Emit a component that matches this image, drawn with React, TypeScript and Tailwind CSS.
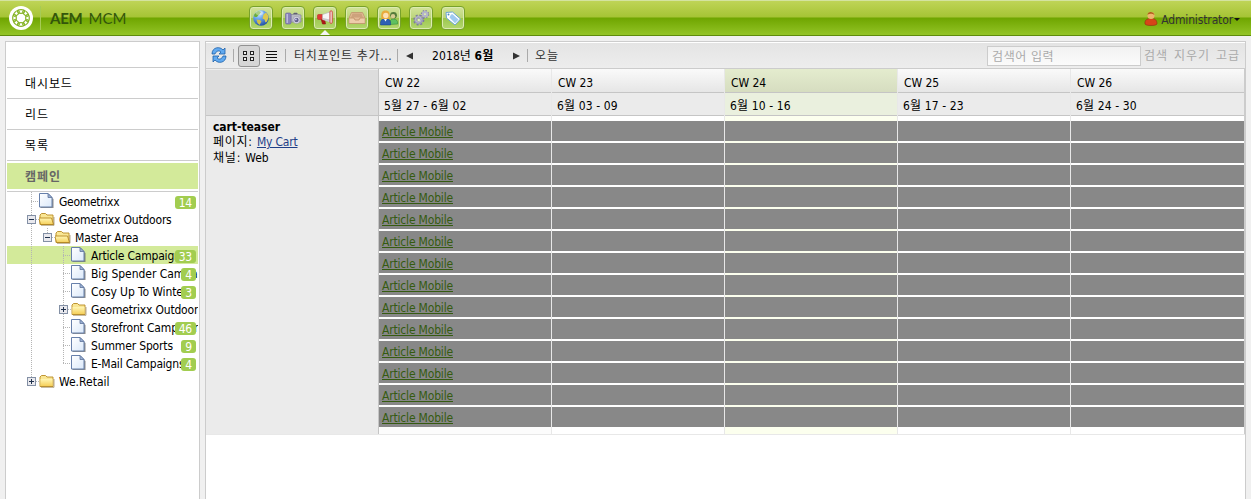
import React from 'react';

const UI = "font-['DejaVu_Sans_Condensed','DejaVu_Sans','Noto_Sans_CJK_KR',sans-serif] [font-stretch:condensed]";

function Tile({ children, active }: { children: React.ReactNode; active?: boolean }) {
  return (
    <div className="relative flex h-6 w-6 items-center justify-center rounded-[4px] border border-[#78a12b] bg-[linear-gradient(to_bottom,#d3e39a_0%,#bcd67c_48%,#9cc74e_52%,#b4d870_100%)] shadow-[inset_0_0_0_1px_#dcebb2]">
      {children}
      {active && (
        <svg className="absolute -bottom-[6px] left-[6px]" width="10" height="5" viewBox="0 0 10 5"><path d="M0 5 5 0l5 5z" fill="#f4f4f4" /></svg>
      )}
    </div>
  );
}

const Globe = () => (
  <svg width="18" height="18" viewBox="0 0 18 18" className="shrink-0">
    <defs><radialGradient id="gl" cx=".35" cy=".2" r=".85"><stop offset="0" stopColor="#e0f1ff" /><stop offset=".4" stopColor="#6daaf0" /><stop offset="1" stopColor="#1d4aa0" /></radialGradient></defs>
    <circle cx="9" cy="9" r="7.800" fill="url(#gl)" />
    <path d="M2 6c1-2 2.500-3.500 5-4L9 3 7.500 5.500 6 6.500 5 8 2.500 8z" fill="#6fae35" />
    <path d="M11.500 5.500l2.500-2c1.500 1.500 2.300 3 2.500 5l-1.500 4-1.500 1-1-3-2-1z" fill="#ddc94d" />
    <path d="M4.500 10.500l3.500.5 1.500 1.500-2 3.500-2-2z" fill="#d0c04c" />
    <ellipse cx="7.500" cy="4" rx="4" ry="2" fill="#fff" opacity=".4" />
  </svg>
);
const Camera = () => (
  <svg width="18" height="18" viewBox="0 0 18 18" className="shrink-0">
    <path d="M7 5.500h2L10 4h3l1 1.500 3 .5v7H7z" fill="#b9bac4" stroke="#85859a" strokeWidth=".7" />
    <path d="M10 4h3l.6 1.500H9z" fill="#60606c" />
    <rect x="1.500" y="4" width="5.500" height="11" rx="1.300" fill="#8983b9" stroke="#6b659d" strokeWidth=".6" /><path d="M3.200 5v9" stroke="#cbc7e7" strokeWidth="1.200" />
    <circle cx="12.500" cy="11" r="3.600" fill="#dedee8" stroke="#8e8ea2" strokeWidth=".6" /><circle cx="12.500" cy="11" r="2.200" fill="#62608c" /><circle cx="11.900" cy="10.400" r=".9" fill="#c6c4ee" />
  </svg>
);
const Horn = () => (
  <svg width="18" height="18" viewBox="0 0 18 18" className="shrink-0">
    <path d="M5 9.500h3.500l1 5.500H6.500z" fill="#b01818" stroke="#8e1010" strokeWidth=".6" />
    <path d="M1.500 6.500q0-1 1-1H7v5H2.500q-1 0-1-1z" fill="#e03a36" stroke="#b52020" strokeWidth=".5" />
    <path d="M6.500 5.500 14 3v10l-7.500-2.500z" fill="#f6f6f6" stroke="#b5b5b5" strokeWidth=".6" /><path d="M7 9l7 1.500V13l-7-2.500z" fill="#c9c9c9" />
    <rect x="14" y="1.800" width="2.200" height="12.600" rx="1.100" fill="#f3f3f3" stroke="#d03430" strokeWidth=".9" />
  </svg>
);
const Tray = () => (
  <svg width="18" height="18" viewBox="0 0 18 18" className="shrink-0">
    <path d="M3.500 3.500h11L17 9v5.500H1V9z" fill="#e2bb95" stroke="#c0936c" strokeWidth=".8" />
    <path d="M4.500 4.500h9L15 8.500H3z" fill="#cda27c" /><path d="M1.500 9H6l1 2h4l1-2h4.500v5h-15z" fill="#edccaa" />
    <path d="M1.500 9H6l1 2h4l1-2h4.500" fill="none" stroke="#b9875c" strokeWidth=".7" />
  </svg>
);
const Users = () => (
  <svg width="20" height="18" viewBox="0 0 20 18" className="shrink-0">
    <path d="M10.500 15.500c0-4 1.500-5.500 4-5.500s4.500 1.500 4.200 5z" fill="#5fc060" stroke="#2c8035" strokeWidth=".5" /><circle cx="14.500" cy="6.300" r="3.400" fill="#547b3a" /><circle cx="14" cy="7.200" r="2.200" fill="#d8cd92" />
    <path d="M1.500 16c-.5-5 1.500-6.500 5-6.500s5.500 1.500 5 6.500z" fill="#2e60b4" stroke="#173e80" strokeWidth=".5" /><path d="M2.500 10c-1-6 .5-8.500 4-8.500s5 2.500 4 8.500z" fill="#e8ab3c" /><circle cx="6.800" cy="6.500" r="2.700" fill="#fde0b4" /><path d="M5 10l1.500 2.500L8 10z" fill="#fff" />
  </svg>
);
const Gears = () => (
  <svg width="18" height="18" viewBox="0 0 18 18" fill="none" className="shrink-0">
    <circle cx="6.800" cy="11" r="4.400" stroke="#7e7e9c" strokeWidth="2.400" strokeDasharray="1.900 1.550" /><circle cx="6.800" cy="11" r="2.900" stroke="#9c9cb8" strokeWidth="2.800" /><circle cx="6.300" cy="10.400" r="2.800" stroke="#c4c4d6" strokeWidth=".8" /><circle cx="6.800" cy="11" r="1.300" fill="#e0ecc2" />
    <circle cx="13" cy="5.200" r="3.300" stroke="#8585a5" strokeWidth="1.800" strokeDasharray="1.400 1.190" /><circle cx="13" cy="5.200" r="2.100" stroke="#b4b4ca" strokeWidth="2.100" /><circle cx="13" cy="5.200" r=".9" fill="#e0ecc2" />
  </svg>
);
const Tag = () => (
  <svg width="18" height="18" viewBox="0 0 18 18" className="shrink-0"><path d="M2 3.500 8.500 3l8 7-5.500 6L2.500 9z" fill="#fff" stroke="#6ba6d8" strokeWidth="1" strokeLinejoin="round" /><path d="M7 5.500l1.500-.3 6 5.200-3.500 3.800L5.500 8.500z" fill="#9fcaf0" /><circle cx="4.500" cy="5.500" r="1" fill="#4a8abf" /></svg>
);

const Logo = () => (
  <svg width="24" height="24" viewBox="0 0 24 24" className="shrink-0">
    <circle cx="12" cy="12" r="12" fill="#fff" />
    <g fill="none" stroke="#86b526" strokeWidth="1.200">
      {[0, 45, 90, 135, 180, 225, 270, 315].map((a) => <ellipse key={a} cx="12" cy="5.500" rx="3.500" ry="1.800" transform={`rotate(${a} 12 12)`} />)}
    </g>
  </svg>
);

const FileIcon = () => (
  <svg className="shrink-0" width="16" height="18" viewBox="0 0 16 18">
    <defs><linearGradient id="fi" x2="1" y2="1"><stop stopColor="#fff" /><stop offset="1" stopColor="#dbe9fa" /></linearGradient></defs>
    <path d="M1.500 4h9l4 3v9h-13z" fill="#666" opacity=".75" />
    <path d="M.5 1.500h8.500l4 4v9.500H.5z" fill="url(#fi)" stroke="#6780ab" /><path d="M9 1.500v4h4z" fill="#9eb4d7" stroke="#5d7299" strokeWidth=".8" />
  </svg>
);
const FolderIcon = ({ open }: { open?: boolean }) => (
  <svg className="shrink-0" width="16" height="18" viewBox="0 0 16 18">
    <defs><linearGradient id="fo" x2="0" y2="1"><stop stopColor="#fff6b4" /><stop offset="1" stopColor="#f5cf5a" /></linearGradient></defs>
    <path d="M1 14.500V5l1.500-1.500h4L8 5h6v9.500z" fill="#f9e694" stroke="#b88a22" strokeWidth=".9" />
    {open
      ? <path d="M-.2 8h12.700l2 6.500h-13z" fill="url(#fo)" stroke="#b88a22" strokeWidth=".9" />
      : <path d="M1.500 7h12v7h-12z" fill="url(#fo)" />}
    <path d="M2 15.300h13V7" fill="none" stroke="#7d6430" opacity=".55" />
  </svg>
);
const Expander = ({ plus, line }: { plus?: boolean; line: string }) => (
  <svg className="shrink-0" width="16" height="18" viewBox="0 0 16 18" shapeRendering="crispEdges">
    <path d={line} stroke="#b4b4b4" strokeDasharray="1 1" />
    <path d="M13 9.500h3" stroke="#bbb" strokeDasharray="1 1" />
    <rect x="4.500" y="5.500" width="8" height="8" fill="#e9e9ee" stroke="#8390a5" /><path d="M6 9.500h5" stroke="#20324e" />
    {plus && <path d="M8.500 7v5" stroke="#20324e" />}
  </svg>
);

/* Dotted guide cell: "v" continues down, "t" branches to the item, "l" ends at the item. */
const Guide = ({ kind }: { kind: string }) => (
  <svg className="shrink-0" width="16" height="18" shapeRendering="crispEdges" stroke="#b4b4b4" strokeDasharray="1 1">
    {kind !== ' ' && <path d={kind === 'l' ? 'M8.500 0v9' : 'M8.500 0v18'} />}
    {(kind === 't' || kind === 'l') && <path d="M8 9.500h8" />}
  </svg>
);

type Row = { g: string; icon: 'file' | 'open' | 'closed'; ex?: '+' | '-'; line?: string; t: string; n?: number; sel?: boolean; ls: string };
const THROUGH = 'M8.500 0v18';
const UPPER = 'M8.500 0v5';
const rows: Row[] = [
  { g: 't', icon: 'file', t: 'Geometrixx', n: 14, ls: 'tracking-[-0.3px]' },
  { g: '', icon: 'open', ex: '-', line: THROUGH, t: 'Geometrixx Outdoors', ls: 'tracking-[-0.2px]' },
  { g: 'v', icon: 'open', ex: '-', line: UPPER, t: 'Master Area', ls: 'tracking-[-0.15px]' },
  { g: 'v t', icon: 'file', t: 'Article Campaign', n: 33, sel: true, ls: 'tracking-[-0.2px]' },
  { g: 'v t', icon: 'file', t: 'Big Spender Campai', n: 4, ls: 'tracking-[-0.05px]' },
  { g: 'v t', icon: 'file', t: 'Cosy Up To Winte', n: 3, ls: 'tracking-[-0.1px]' },
  { g: 'v ', icon: 'closed', ex: '+', line: THROUGH, t: 'Geometrixx Outdoor', ls: 'tracking-[-0.2px]' },
  { g: 'v t', icon: 'file', t: 'Storefront Campaigr', n: 46, ls: 'tracking-[-0.15px]' },
  { g: 'v t', icon: 'file', t: 'Summer Sports', n: 9, ls: 'tracking-[-0.15px]' },
  { g: 'v l', icon: 'file', t: 'E-Mail Campaigns', n: 4, ls: 'tracking-[-0.2px]' },
  { g: '', icon: 'closed', ex: '+', line: UPPER, t: 'We.Retail', ls: 'tracking-[0px]' },
];

const TreeRow = ({ r }: { r: Row }) => {
  const cells = r.ex && r.g.endsWith(' ') ? r.g.slice(0, -1) + ' ' : r.g;
  return (
    <div className={`relative flex h-[18px] shrink-0 items-center overflow-hidden pl-4 ${r.sel ? 'bg-[#d3ea9a]' : ''}`}>
      {cells.split('').map((k, i) => <Guide key={i} kind={k} />)}
      {r.ex && <Expander plus={r.ex === '+'} line={r.line ?? ''} />}
      {r.icon === 'file' ? <FileIcon /> : <FolderIcon open={r.icon === 'open'} />}
      <span className={`ml-1 whitespace-pre pt-[2px] text-[12px] leading-[18px] ${r.ls}`}>{r.t}</span>
      {r.n && <span className="absolute right-[2px] top-1 flex h-[13px] items-center rounded-[3px] bg-[#a2cd50] px-[4px] pt-[2px] text-[12px] leading-[13px] tracking-[-0.2px] text-white">{r.n}</span>}
    </div>
  );
};

const weeks = [
  ['CW 22', '5월 27 - 6월 02'],
  ['CW 23', '6월 03 - 09'],
  ['CW 24', '6월 10 - 16'],
  ['CW 25', '6월 17 - 23'],
  ['CW 26', '6월 24 - 30'],
];
const bars = Array.from({ length: 14 }, (_, i) => i);
const Sep = ({ m }: { m: string }) => <span className={`h-[13px] w-px shrink-0 bg-[#aaa] ${m}`} />;

export default function App() {
  return (
    <div className={`flex h-[499px] w-[1251px] flex-col overflow-hidden bg-[#f0f0f0] text-[12px] text-black ${UI}`}>
      <header className="flex h-[36px] shrink-0 items-center border-b border-t border-b-[#5e8b0b] border-t-[#d4e3a0] bg-[linear-gradient(to_bottom,#bfd457_0%,#a6c435_47%,#6fa500_50%,#93c426_100%)] pl-[9px] pr-[11px]">
        <Logo />
        <span className="ml-[7px] h-6 w-px bg-[#a6cb55]" />
        <span className="ml-[9px] w-[199px] whitespace-nowrap font-['Lato',sans-serif] text-[15px] text-[#33560b]"><b className="font-bold tracking-[-0.25px]">AEM</b><span className="ml-[6px]">MCM</span></span>
        <div className="flex gap-2">
          <Tile><Globe /></Tile><Tile><Camera /></Tile><Tile active><Horn /></Tile><Tile><Tray /></Tile><Tile><Users /></Tile><Tile><Gears /></Tile><Tile><Tag /></Tile>
        </div>
        <div className="ml-auto flex items-center pt-[3px] text-[#333]">
          <svg width="14" height="16" viewBox="0 0 14 16" className="mb-[2px]"><path d="M1 13c-.5-4 2-5.500 6-5.500s6 1.500 6 5.500c-1 2-11 2-12 0z" fill="#d64518" stroke="#8c3210" strokeWidth=".6" /><circle cx="7" cy="4.500" r="3.500" fill="#efb56c" /><path d="M3.500 4c0-4 6-4 7 0-2-1-4-2-7 0z" fill="#b05b18" /></svg>
          <span className="ml-[3px] tracking-[-0.13px]">Administrator</span>
          <svg className="ml-px" width="6" height="4"><path d="M0 0h6L3 3z" fill="#111" /></svg>
        </div>
      </header>
      <div className="flex min-h-0 flex-1 gap-[5px] pl-[5px] pr-[5px] pt-[5px]">
        <aside className="flex w-[195px] flex-col border border-b-0 border-[#ccc] bg-white px-px">
          <div className="h-[26px] shrink-0 border-b border-[#ccc]" />
          {['대시보드', '리드', '목록'].map((t) => (
            <div key={t} className="flex h-[31px] shrink-0 items-center border-b border-[#ccc] pl-[18px] pt-px tracking-[0.9px]">{t}</div>
          ))}
          <div className="flex h-[31px] shrink-0 flex-col justify-center border-b border-[#ccc]">
            <div className="flex h-[26px] items-center bg-[#d3ea9a] pl-[18px] pt-px font-bold tracking-[0.9px] text-[#666]">캠페인</div>
          </div>
          {rows.map((r, i) => <TreeRow key={i} r={r} />)}
        </aside>
        <main className="flex w-[1041px] flex-col border border-b-0 border-[#ccc] bg-white">
          <div className="flex h-[27px] shrink-0 items-center border-b border-t border-b-[#ccc] border-t-white bg-gradient-to-b from-[#e4e4e4] to-[#ededed] pl-[5px] pr-[5px] text-[#333]">
            <svg width="16" height="16" viewBox="0 0 16 16" className="mb-[2px]"><g fill="#62aaf0" stroke="#1c5fa8" strokeWidth=".8"><path d="M1 7c0-7 8-8 11-4l2-2v6H8l2-2C8 3 5 4 4 7z" /><path d="M15 9c0 7-8 8-11 4l-2 2V9h6l-2 2c2 2 5 1 6-2z" /></g></svg>
            <Sep m="ml-[6px]" />
            <span className="ml-1 flex h-[22px] w-[22px] items-center justify-center rounded-[3px] border border-[#929292] bg-[#d6d6d6]">
              <svg width="12" height="12" fill="#eee" stroke="#222" shapeRendering="crispEdges"><path d="M.5 1.500h3v3h-3zM7.500 1.500h3v3h-3zM.5 7.500h3v3h-3zM7.500 7.500h3v3h-3z" /></svg>
            </span>
            <svg className="ml-[6px]" width="11" height="12" stroke="#111" strokeWidth="1" shapeRendering="crispEdges"><path d="M0 1.500h11M0 4.500h11M0 7.500h11M0 10.500h11" /></svg>
            <Sep m="ml-2" />
            <span className="ml-2 w-[98px] whitespace-nowrap pt-px tracking-[0.68px]">터치포인트 추가...</span>
            <Sep m="ml-[5px]" />
            <svg className="ml-2" width="8" height="8"><path d="M7 .5v7L0 4z" fill="#333" /></svg>
            <span className="ml-[18px] w-[63px] whitespace-nowrap pt-px tracking-[0.1px] text-black">2018년 <b>6월</b></span>
            <svg className="ml-[17px]" width="8" height="8"><path d="M1 .5v7L8 4z" fill="#333" /></svg>
            <Sep m="ml-[7px]" />
            <span className="ml-[7px] tracking-[0.9px]">오늘</span>
            <input aria-label="검색" placeholder="검색어 입력" className="ml-auto h-5 w-[154px] border border-[#ccc] bg-gradient-to-b from-[#f2f2f2] to-[#fbfbfb] pl-1 pt-[3px] tracking-[0.6px] outline-none placeholder:text-[#aaa]" />
            <span className="ml-[3px] w-[24px] whitespace-nowrap tracking-[0.9px] text-[#aaa]">검색</span><span className="ml-[6px] w-[36px] whitespace-nowrap tracking-[0.9px] text-[#aaa]">지우기</span><span className="ml-[6px] w-[24px] whitespace-nowrap tracking-[0.9px] text-[#aaa]">고급</span>
          </div>
          <div className="flex h-[366px] shrink-0 border-b border-[#e8e8e8]">
            <div className="flex w-[173px] shrink-0 flex-col border-r border-[#c5c5c5] bg-[#ebebeb]">
              <div className="h-[47px] shrink-0 border-b border-t border-b-[#c5c5c5] border-t-[#eee] bg-[#ddd]" />
              <div className="flex flex-col pl-[7px] pt-[3px] leading-[16px]">
                <b className="h-[15px] tracking-[-0.05px]">cart-teaser</b>
                <span className="h-4"><span className="tracking-[0.75px]">페이지: </span><a className="tracking-[-0.2px] text-[#1f3f88] underline">My Cart</a></span>
                <span><span className="tracking-[0.8px]">채널: </span><span className="tracking-[-0.1px]">Web</span></span>
              </div>
            </div>
            {weeks.map(([a, b], i) => (
              <div key={a} className={`flex shrink-0 flex-col border-r ${i === 4 ? 'w-[174px] border-[#ccc]' : 'w-[173px] border-[#e8e8e8]'} ${i === 2 ? 'bg-[#fcffee]' : i === 0 ? 'bg-[#fcfcfc]' : 'bg-white'}`}>
                <div className={`flex h-6 shrink-0 items-center border-b border-[#c5c5c5] pl-[6px] pt-1 tracking-[-0.05px] ${i === 2 ? 'bg-gradient-to-b from-[#e4ecce] to-[#d6ddc0]' : 'bg-gradient-to-b from-[#fafafa] to-[#e6e6e6]'}`}>{a}</div>
                <div className={`flex h-[23px] shrink-0 items-center border-b border-[#c5c5c5] pl-[5px] pt-[3px] tracking-[0.12px] ${i === 2 ? 'bg-[#eaf0de]' : 'bg-[#ebebeb]'}`}>{b}</div>
                <div className="flex flex-col gap-0.5 pt-[5px]">
                  {bars.map((n) => (
                    <div key={n} className="flex h-5 items-center bg-[#888] pl-[3px] pt-0.5">
                      {i === 0 && <a className="tracking-[-0.18px] text-[#355b10] underline">Article Mobile</a>}
                    </div>
                  ))}
                </div>
              </div>
            ))}
          </div>
        </main>
      </div>
    </div>
  );
}
